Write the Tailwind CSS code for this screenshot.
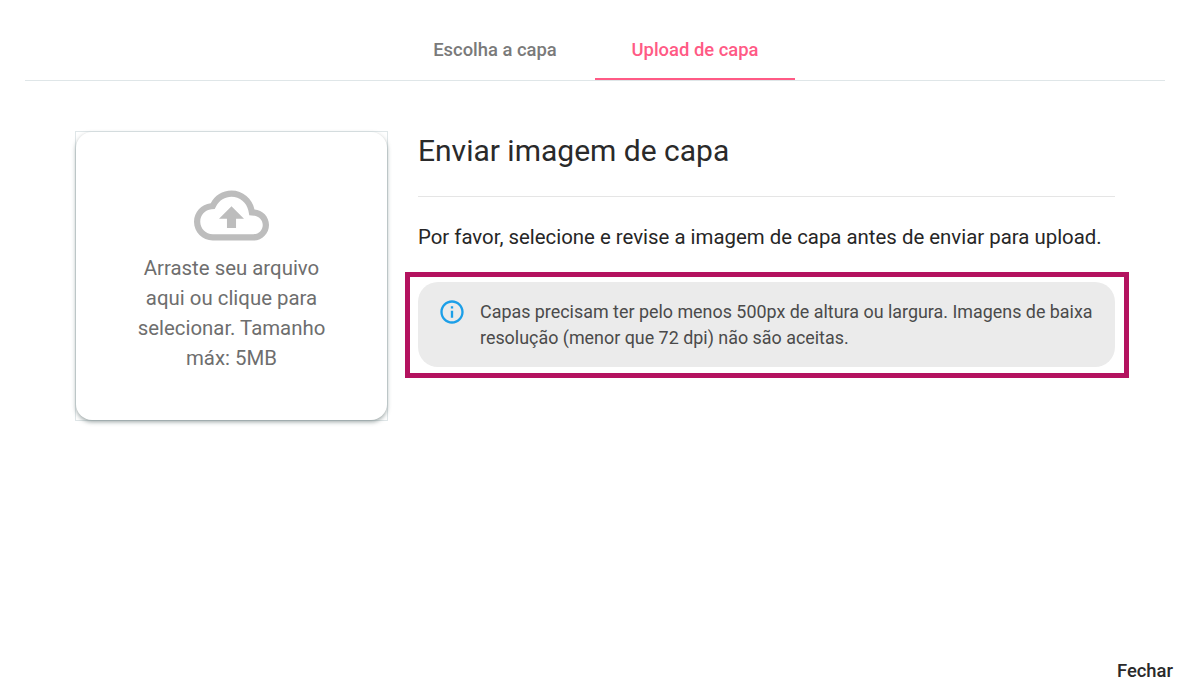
<!DOCTYPE html>
<html lang="pt-BR">

<head>
    <meta charset="UTF-8">
    <meta name="viewport" content="width=device-width, initial-scale=1.0">
    <title>Upload de capa</title>
    <script src="https://cdn.jsdelivr.net/npm/@tailwindcss/browser@4"></script>
</head>

<body class="bg-white font-['Roboto',sans-serif] overflow-hidden">
    <div class="w-[1182px] h-[697px] relative flex flex-col px-[25px] pt-[19px]">

        <!-- tabs -->
        <div class="w-[1140px] h-[62px] flex justify-center border-b border-[#dfe6e8]">
            <div class="w-[200px] h-[61px] flex items-center justify-center text-[18.4px] font-medium text-[#7a7a7a]">Escolha a capa</div>
            <div class="w-[200px] h-[61px] pt-[2px] flex items-center justify-center text-[18.4px] font-medium text-[#ff5a85] border-b-2 border-[#ff5a85]">Upload de capa</div>
        </div>

        <div class="flex pl-[50px] pt-[50px]">
            <!-- drop area -->
            <div class="w-[313px] h-[290px] shrink-0 relative border border-[#dfe6e8]">
                <div class="absolute inset-0 rounded-[16px] bg-white shadow-[0_2px_4px_rgba(60,80,80,0.5)] flex flex-col items-center pt-[46px]">
                    <svg class="w-[75px] h-[75px] text-[#bdbdbd]" viewBox="0 0 24 24" fill="currentColor">
                        <path d="M19.35 10.04C18.67 6.59 15.64 4 12 4 9.11 4 6.6 5.64 5.35 8.04 2.34 8.36 0 10.91 0 14c0 3.31 2.69 6 6 6h13c2.76 0 5-2.24 5-5 0-2.64-2.05-4.78-4.65-4.96zM19 18H6c-2.21 0-4-1.79-4-4 0-2.05 1.53-3.76 3.56-3.97l1.07-.11.5-.95C8.08 7.14 9.94 6 12 6c2.62 0 4.88 1.86 5.39 4.43l.3 1.5 1.53.11c1.56.1 2.78 1.41 2.78 2.96 0 1.65-1.35 3-3 3zM8 13h2.55v3h2.9v-3H16l-4-4z" />
                    </svg>
                    <p class="w-[200px] text-center text-[20.4px] leading-[30px] text-[#6e6e6e]">Arraste seu arquivo aqui ou clique para selecionar. Tamanho máx: 5MB</p>
                </div>
            </div>

            <!-- text -->
            <div class="w-[697px] ml-[30px]">
                <h2 class="h-[66px] pt-[1px] text-[30px] leading-[38px] text-[#2a2a2a] border-b border-[#e5e5e5]">Enviar imagem de capa</h2>
                <p class="mt-[27px] text-[20.4px] leading-[26px] text-[#262626]">Por favor, selecione e revise a imagem de capa antes de enviar para upload.</p>
                <div class="relative mt-[32px] h-[85px] rounded-[20px] bg-[#ebebeb] flex pl-[20px] pr-[18px] pt-[16px]">
                    <svg class="w-[28px] h-[28px] shrink-0 text-[#1c9fe8]" viewBox="0 0 24 24" fill="currentColor">
                        <path d="M11 7h2v2h-2zm0 4h2v6h-2zm1-9C6.48 2 2 6.48 2 12s4.48 10 10 10 10-4.48 10-10S17.52 2 12 2zm0 18c-4.41 0-8-3.59-8-8s3.59-8 8-8 8 3.59 8 8-3.59 8-8 8z" />
                    </svg>
                    <p class="ml-[14px] pt-[1px] text-[17.9px] leading-[26px] text-[#4a4a4a]">Capas precisam ter pelo menos 500px de altura ou largura. Imagens de baixa resolução (menor que 72 dpi) não são aceitas.</p>
                    <!-- highlight frame -->
                    <div class="absolute -left-[13px] -right-[14px] -top-[10px] -bottom-[11px] border-[5px] border-[#b4125f]"></div>
                </div>
            </div>
        </div>

        <button class="absolute right-[9px] top-[660px] text-[18.4px] font-medium leading-[22px] text-[#2a2a2a]">Fechar</button>
    </div>
</body>

</html>
